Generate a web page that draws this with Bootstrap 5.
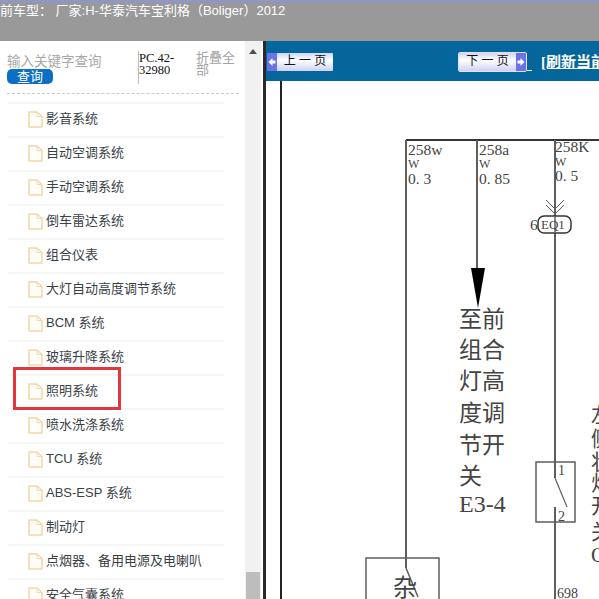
<!DOCTYPE html>
<html lang="zh"><head><meta charset="utf-8">
<link href="https://cdn.jsdelivr.net/npm/bootstrap@5.3.0/dist/css/bootstrap.min.css" rel="stylesheet">
<style>
html,body{height:599px;overflow:hidden;background:#fff}
body{font-family:"Liberation Sans","Noto Sans CJK SC",sans-serif}
.page-wrap{height:599px;width:599px}
.top-strip{height:41px;background:linear-gradient(#8f97c4 0,#8f97c4 2px,#999 3px);color:#fff;font-size:13px;line-height:20px;padding-top:1px;white-space:nowrap;flex:none}
.main-row{height:558px}
.side-pane{width:263px;flex:none;position:relative;overflow:hidden}
.side-scroll{width:16px;margin-right:2px;flex:none;background:#f1f1f1;position:relative}
.scroll-thumb{position:absolute;left:1px;right:1px;top:531px;height:27px;background:#bdbdbd}
.scroll-arrow{width:0;height:0;border:4px solid transparent;border-bottom:5px solid #505050;border-top:0;margin:8px auto 0}
.side-body{width:245px;flex:none}
.search-area{height:53px;margin:0 7px;border-bottom:1px dashed #ccc;position:relative;width:232px}
.hint-text{font-size:13.5px;color:#a9a9a9;line-height:14px;padding-top:14px}
.query-btn{width:46px;height:15px;background:#0d6fc4;border-radius:5px;color:#fff;font-size:13px;line-height:15px;text-align:center}
.pc-cell{position:absolute;left:131px;top:10px;height:33px;width:50px;border-left:1px solid #bbb;font:12.5px/12px "Liberation Serif",serif;color:#111;padding-top:1px}
.fold-cell{position:absolute;left:189px;top:11px;width:40px;font-size:13px;line-height:12px;color:#a3a3a3}
.tree-list{margin:8px 0 0 8px;width:216px}
.tree-row{height:34px;border-top:2px solid #f6f6f6;display:flex;align-items:center;padding-left:20px;padding-bottom:2px;font-size:13px;color:#3a3f47;white-space:nowrap}
.tree-row svg{width:15px;height:17px;margin-right:3px;flex:none}
.red-box{position:absolute;left:13px;top:326px;width:108px;height:43px;border:3px solid #e0363c}
.view-pane{flex:1;border-left:3px solid #2a2a2a;position:relative;overflow:hidden;min-width:0}
.blue-head{height:40px;background:#04669b;position:relative;white-space:nowrap}
.page-btn{position:absolute;top:12px;height:18px;background:linear-gradient(#d0d5f6,#fff 40%,#cdd2f4);font-size:12px;line-height:17px;color:#111;text-align:center;border-radius:1px}
.page-btn svg{position:absolute;top:0;width:10px;height:18px;display:block}
.prev-btn{left:1px;width:66px;padding-left:10px}.prev-btn svg{left:0}
.next-btn{left:193px;width:67px;padding-right:10px;outline:1px solid #dfe3ff}.next-btn svg{right:0}
.under-bit{position:absolute;left:261px;top:29px;width:5px;height:1px;background:#fff}
.refresh-link{position:absolute;left:275px;top:11px;color:#fff;font:bold 15px/20px "Liberation Serif","Noto Sans CJK SC",serif;text-decoration:underline}
.diagram{display:block;position:absolute;left:0;top:40px}
.diagram text{font-family:"Liberation Serif","Noto Sans CJK SC",serif;fill:#444}
</style></head><body>
<div class="page-wrap d-flex flex-column">
<div class="top-strip">前车型：&nbsp;厂家:H-华泰汽车宝利格（Boliger）2012</div>
<div class="main-row d-flex">
<div class="side-pane d-flex">
<div class="side-body">
<div class="search-area">
<div class="hint-text">输入关键字查询</div>
<div class="query-btn">查询</div>
<div class="pc-cell">PC.42-<br>32980</div>
<div class="fold-cell">折叠全部</div>
</div>
<div class="tree-list" id="tl"></div>
</div>
<div class="side-scroll"><div class="scroll-arrow"></div><div class="scroll-thumb"></div></div>
<div class="red-box"></div>
</div>
<div class="view-pane">
<div class="blue-head">
<div class="page-btn prev-btn"><svg viewBox="0 0 10 18"><rect width="10" height="18" fill="#6a72e6"/><path d="M1.5 9L5.5 5V7.5H8.5V10.5H5.5V13Z" fill="#fff"/></svg>上 一 页</div>
<div class="page-btn next-btn">下 一 页<svg viewBox="0 0 10 18"><rect width="10" height="18" fill="#6a72e6"/><path d="M8.5 9L4.5 5V7.5H1.5V10.5H4.5V13Z" fill="#fff"/></svg></div>
<div class="under-bit"></div>
<a class="refresh-link">[刷新当前页]</a>
</div>
<svg class="diagram" width="334" height="518" viewBox="0 0 334 518" fill="none">
<g stroke="#5e5e5e" stroke-width="2">
<path d="M15 0V518" stroke="#222"/>
<path d="M140 59H334" stroke="#333"/>
<path d="M140 59V487M211 59V190M289 59V397M289 426V518"/>
<path d="M140 487L152 516" stroke-width="1.5"/>
<path d="M280 124l9 9 9-9M280 119l9 9 9-9" stroke-width="1"/>
<rect x="272" y="135" width="33" height="17" rx="6" fill="#fff" stroke="#333" stroke-width="1.5"/>
<path d="M289 135V152" stroke-width="1.5"/>
<rect x="270" y="381" width="39" height="60" stroke-width="1.5"/>
<path d="M289 397L301 426" stroke-width="1.2"/>
<rect x="100" y="477" width="73" height="50" stroke-width="1.5"/>
</g>
<path d="M205 187h14l-7 40z" fill="#000"/>
<g font-size="15.5">
<text x="142" y="74">258w</text><text x="213" y="74">258a</text><text x="289" y="71">258K</text>
<text x="142" y="87" font-size="12">W</text><text x="213" y="87" font-size="12">W</text><text x="289" y="85" font-size="12">W</text>
<text x="142" y="103">0. 3</text><text x="213" y="103">0. 85</text><text x="289" y="100">0. 5</text>
<text x="264" y="149">6</text><text x="275" y="148" font-size="13">EQ1</text>
<text x="292" y="394" font-size="14">1</text><text x="292" y="440" font-size="14">2</text>
<text x="291" y="517" font-size="14">698</text>
</g>
<g font-size="23">
<text x="193" y="246">至前</text><text x="193" y="277">组合</text><text x="193" y="308">灯高</text><text x="193" y="340">度调</text><text x="193" y="372">节开</text><text x="193" y="403">关</text><text x="193" y="431" font-size="24">E3-4</text>
</g>
<g font-size="21">
<text x="325" y="341">左</text><text x="325" y="365">侧</text><text x="325" y="388">状</text><text x="325" y="409">灯</text><text x="325" y="432">开</text><text x="325" y="458">关</text><text x="325" y="481">Q</text>
<text x="127" y="515" font-size="24">杂</text>
</g>
</svg>
</div>
</div>
</div>
<script>
var n=["影音系统","自动空调系统","手动空调系统","倒车雷达系统","组合仪表","大灯自动高度调节系统","BCM 系统","玻璃升降系统","照明系统","喷水洗涤系统","TCU 系统","ABS-ESP 系统","制动灯","点烟器、备用电源及电喇叭","安全气囊系统"];
document.getElementById('tl').innerHTML=n.map(function(t){return '<div class="tree-row"><svg viewBox="0 0 15 17" fill="#fffdf8" stroke="#f4d6a8" stroke-width="1.5" stroke-linejoin="round"><path d="M1 1H9L14 5.5V16H1Z"/><path d="M9 1V5.5H14" fill="none" stroke-width="1"/></svg>'+t+'</div>'}).join('');
</script>
</body></html>
